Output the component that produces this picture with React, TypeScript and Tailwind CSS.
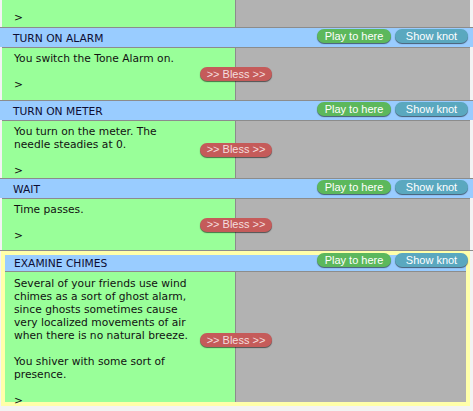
import type { ReactNode } from 'react'

const body = { fontFamily: '"DejaVu Sans", Verdana, sans-serif' }
const btn = { fontFamily: '"Liberation Sans", Arial, sans-serif' }

function Pill({ color, w, children }: { color: string; w: string; children: ReactNode }) {
  return (
    <button
      type="button"
      style={btn}
      className={`${color} ${w} flex h-[14px] items-center justify-center rounded-full text-[11px] leading-none text-white shadow-[0_1px_1px_rgba(0,0,0,0.55)]`}
    >
      {children}
    </button>
  )
}

function HeaderButtons({ top }: { top: string }) {
  return (
    <div className={`absolute right-[5px] ${top} flex gap-[4px]`}>
      <Pill color="bg-[#5cb85c]" w="w-[74px]">Play to here</Pill>
      <Pill color="bg-[#5aa8bf]" w="w-[73px]">Show knot</Pill>
    </div>
  )
}

function Bless({ pos }: { pos: string }) {
  return (
    <button
      type="button"
      style={btn}
      className={`absolute ${pos} flex h-[14px] w-[72px] items-center justify-center rounded-full bg-[#c55b5a] text-[11px] leading-none text-[#f4dede] shadow-[0_1px_1px_rgba(0,0,0,0.55)]`}
    >
      &gt;&gt; Bless &gt;&gt;
    </button>
  )
}

type Turn = {
  title: string
  lines: ReactNode
  height: string
}

const turns: Turn[] = [
  { title: 'TURN ON ALARM', lines: <p>You switch the Tone Alarm on.</p>, height: 'h-[53px]' },
  {
    title: 'TURN ON METER',
    lines: (
      <p>
        You turn on the meter. The
        <br />
        needle steadies at 0.
      </p>
    ),
    height: 'h-[58px]',
  },
  { title: 'WAIT', lines: <p>Time passes.</p>, height: 'h-[52px]' },
]

function Prompt() {
  return <p className="mt-[13px]">&gt;</p>
}

export default function App() {
  return (
    <div style={body} className="h-[411px] w-[473px] overflow-hidden bg-[#f3f3f3] text-[10.7px] leading-[13px] text-[#111]">
      {/* tail of the previous turn */}
      <div className="ml-[2px] mr-[3px] flex h-[27px]">
        <div className="w-[234px] border-r border-[#8c8c8c] bg-[#99ff99] pl-[12px] pt-[11px]">&gt;</div>
        <div className="flex-1 bg-[#b2b2b2]" />
      </div>

      {turns.map((t) => (
        <section key={t.title} className="relative border-t border-[#8c8c8c]">
          <div className="flex h-[19px] items-center bg-[#99ccff] pl-[13px] pt-[1px] text-[#0d0d33]">{t.title}</div>
          <div className={`relative ml-[2px] mr-[3px] flex border-t border-[#8c8c8c] ${t.height}`}>
            <div className="w-[234px] border-r border-[#8c8c8c] bg-[#99ff99] pl-[12px] pt-[4px]">
              {t.lines}
              <Prompt />
            </div>
            <div className="flex-1 bg-[#b2b2b2]" />
            <Bless pos="left-[198px] top-1/2 -translate-y-1/2" />
          </div>
          <HeaderButtons top="top-[1px]" />
        </section>
      ))}

      <section className="relative border-t border-[#8c8c8c]">
        <div className="ml-[1px] mr-[3px] border-[4px] border-[#ffffaa]">
          <div className="flex h-[16px] items-center bg-[#99ccff] pl-[9px] pt-[1px] text-[#0d0d33]">EXAMINE CHIMES</div>
          <div className="relative flex h-[131px] border-t border-[#8c8c8c]">
            <div className="w-[231px] border-r border-[#8c8c8c] bg-[#99ff99] pl-[9px] pt-[5px]">
              <p>
                Several of your friends use wind
                <br />
                chimes as a sort of ghost alarm,
                <br />
                since ghosts sometimes cause
                <br />
                very localized movements of air
                <br />
                when there is no natural breeze.
              </p>
              <p className="mt-[13px]">
                You shiver with some sort of
                <br />
                presence.
              </p>
              <Prompt />
            </div>
            <div className="flex-1 bg-[#b2b2b2]" />
            <Bless pos="left-[195px] top-[61px]" />
          </div>
        </div>
        <HeaderButtons top="top-[2px]" />
      </section>
    </div>
  )
}
